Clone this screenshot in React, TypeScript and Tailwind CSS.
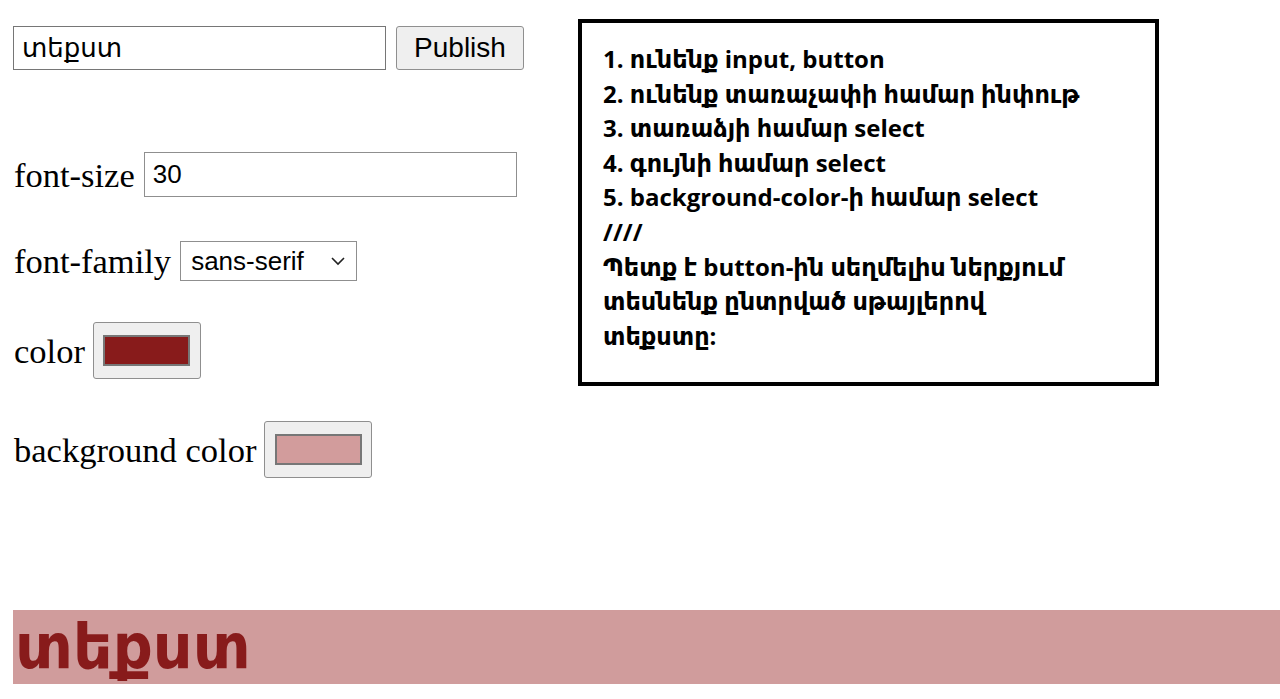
const serif = "font-['Liberation_Serif','Times_New_Roman','DejaVu_Serif',serif]";
const sans = "font-['Liberation_Sans',Arial,'DejaVu_Sans',sans-serif]";

function ColorBox({ color }: { color: string }) {
  return (
    <span className="inline-flex h-[57px] w-[108px] items-center justify-center rounded-[3px] border border-[#8f8f8f] bg-[#efefef] align-middle">
      <span className="h-[31px] w-[87px] border-2 border-[#777]" style={{ backgroundColor: color }} />
    </span>
  );
}

export default function App() {
  return (
    <div className="min-h-screen bg-white text-black">
      <div className="flex items-start">
        <div className="w-[565px] shrink-0 pl-[13px] pt-[26px]">
          <div className="flex gap-[10px]">
            <input
              defaultValue="տեքստ"
              className={`${sans} h-[44px] w-[373px] border border-[#767676] px-[8px] text-[26px] outline-none`}
            />
            <button
              className={`${sans} h-[44px] w-[128px] rounded-[3px] border border-[#8f8f8f] bg-[#efefef] text-[28px]`}
            >
              Publish
            </button>
          </div>

          <div className={`${serif} mt-[82px] flex items-center gap-[9px] text-[34.5px] leading-[36px]`}>
            <span className="pl-[1px]">font-size</span>
            <input
              defaultValue="30"
              className={`${sans} h-[45px] w-[373px] border border-[#8f8f8f] px-[8px] text-[26px] outline-none`}
            />
          </div>

          <div className={`${serif} mt-[44px] flex items-center gap-[9px] text-[34.5px] leading-[36px]`}>
            <span className="pl-[1px]">font-family</span>
            <div
              className={`${sans} flex h-[40px] w-[177px] items-center justify-between border border-[#8f8f8f] pl-[10px] pr-[10px] text-[26px]`}
            >
              <span>sans-serif</span>
              <svg width="16" height="10" viewBox="0 0 16 10" fill="none" stroke="#222" strokeWidth="1.6">
                <path d="M2 2l6 6 6-6" />
              </svg>
            </div>
          </div>

          <div className={`${serif} mt-[41px] flex items-center gap-[8px] text-[34.5px] leading-[36px]`}>
            <span className="pl-[1px]">color</span>
            <ColorBox color="#881b1b" />
          </div>

          <div className={`${serif} mt-[42px] flex items-center gap-[8px] text-[34.5px] leading-[36px]`}>
            <span className="pl-[1px]">background color</span>
            <ColorBox color="#d29c9c" />
          </div>
        </div>

        <div className="ml-[13px] mt-[19px] h-[367px] w-[581px] border-4 border-black pl-[21px] pt-[19px]">
          <div className="font-['Open_Sans','DejaVu_Sans',sans-serif] text-[24px] font-bold leading-[34.6px]">
            <div>1. ունենք input, button</div>
            <div>2. ունենք տառաչափի համար ինփութ</div>
            <div>3. տառաձյի համար select</div>
            <div>4. գույնի համար select</div>
            <div>5. background-color-ի համար select</div>
            <div>////</div>
            <div>Պետք է button-ին սեղմելիս ներքյում</div>
            <div>տեսնենք ընտրված սթայլերով</div>
            <div>տեքստը:</div>
          </div>
        </div>
      </div>

      <div className="ml-[13px] mt-[132px] flex h-[74px] items-center bg-[#d09c9c] pl-[2px]">
        <span className="font-['DejaVu_Sans',sans-serif] text-[62px] font-bold leading-none text-[#881b1b]">
          տեքստ
        </span>
      </div>
    </div>
  );
}
